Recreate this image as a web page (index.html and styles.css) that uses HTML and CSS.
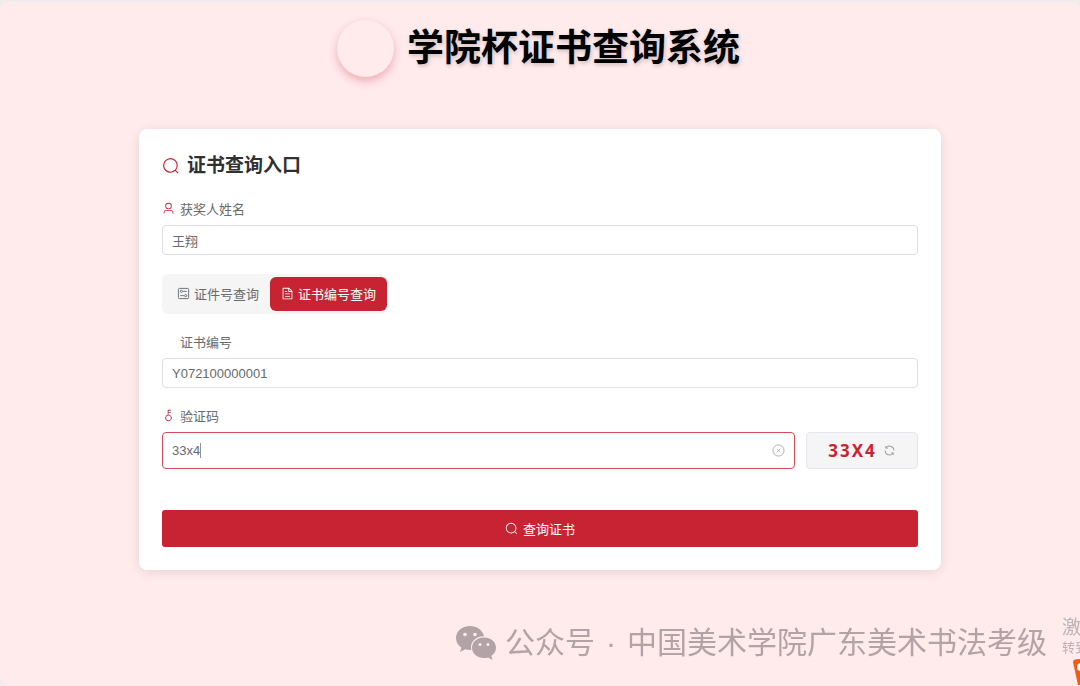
FILE: index.html
```html
<!DOCTYPE html>
<html lang="zh-CN">
  <head>
    <meta charset="utf-8">
    <title>学院杯证书查询系统</title>
    <link rel="stylesheet" href="styles.css">
  </head>
  <body>
    <div class="page">
      <header class="header">
        <div class="logo"></div>
        <h1>学院杯证书查询系统</h1>
      </header>

      <main class="card">
        <h2 class="card-title">
          <svg class="icon icon-large" viewBox="0 0 1024 1024"><path d="m795.904 750.72 124.992 124.928a32 32 0 0 1-45.248 45.248L750.656 795.904a416 416 0 1 1 45.248-45.248zM480 832a352 352 0 1 0 0-704 352 352 0 0 0 0 704z"/></svg>
          证书查询入口
        </h2>

        <form>
          <div class="field">
            <label for="name">
              <svg class="icon" viewBox="0 0 1024 1024"><path d="M512 512a192 192 0 1 0 0-384 192 192 0 0 0 0 384zm0 64a256 256 0 1 1 0-512 256 256 0 0 1 0 512zm320 320v-96a96 96 0 0 0-96-96H288a96 96 0 0 0-96 96v96a32 32 0 1 1-64 0v-96a160 160 0 0 1 160-160h448a160 160 0 0 1 160 160v96a32 32 0 1 1-64 0z"/></svg>
              获奖人姓名
            </label>
            <input class="input" type="text" id="name" value="王翔">
          </div>

          <div class="tabs">
            <button type="button" class="tab">
              <svg class="icon" viewBox="0 0 14 14"><rect class="line" x="1.500" y="1.500" width="11" height="11" rx="1"/><path class="line" d="M6.500 4.700h4M3.500 9.300h4"/><circle class="line" cx="4.700" cy="4.700" r="1.200"/><circle class="line" cx="9.300" cy="9.300" r="1.200"/></svg>
              证件号查询
            </button>
            <button type="button" class="tab active">
              <svg class="icon" viewBox="0 0 1024 1024"><path d="M832 384H576V128H192v768h640V384zm-26.496-64L640 154.496V320h165.504zM160 64h480l256 256v608a32 32 0 0 1-32 32H160a32 32 0 0 1-32-32V96a32 32 0 0 1 32-32zm160 448h384v64H320v-64zm0-192h160v64H320v-64zm0 384h384v64H320v-64z"/></svg>
              证书编号查询
            </button>
          </div>

          <div class="field">
            <label for="number"><span class="icon"></span>证书编号</label>
            <input class="input" type="text" id="number" value="Y072100000001">
          </div>

          <div class="field">
            <label for="code">
              <svg class="icon" viewBox="0 0 1024 1024"><path d="M448 456.064V96a32 32 0 0 1 32-32.064L672 64a32 32 0 0 1 0 64H512v128h160a32 32 0 0 1 0 64H512v128a256 256 0 1 1-64 8.064zM512 896a192 192 0 1 0 0-384 192 192 0 0 0 0 384z"/></svg>
              验证码
            </label>
            <div class="code-row">
              <div class="code-input">
                <input class="input" type="text" id="code" value="33x4">
                <span class="caret"></span>
                <button type="button" class="clear" aria-label="清空">
                  <svg class="icon" viewBox="0 0 14 14"><circle class="line" cx="7" cy="7" r="6"/><path class="line" d="M5.200 5.200l3.600 3.600M8.800 5.200l-3.600 3.600"/></svg>
                </button>
              </div>
              <button type="button" class="captcha" aria-label="刷新验证码">
                <span>33X4</span>
                <svg class="icon" viewBox="0 0 1024 1024"><path d="M771.776 794.880A384 384 0 0 1 128 512h64a320 320 0 0 0 555.712 216.448H654.720a32 32 0 1 1 0-64h149.056a32 32 0 0 1 32 32v148.928a32 32 0 1 1-64 0v-50.560zM276.288 295.616h92.992a32 32 0 0 1 0 64H220.160a32 32 0 0 1-32-32V178.560a32 32 0 0 1 64 0v50.560A384 384 0 0 1 896.128 512h-64a320 320 0 0 0-555.776-216.384z"/></svg>
              </button>
            </div>
          </div>

          <button type="submit" class="submit">
            <svg class="icon" viewBox="0 0 1024 1024"><path d="m795.904 750.72 124.992 124.928a32 32 0 0 1-45.248 45.248L750.656 795.904a416 416 0 1 1 45.248-45.248zM480 832a352 352 0 1 0 0-704 352 352 0 0 0 0 704z"/></svg>
            查询证书
          </button>
        </form>
      </main>
    </div>

    <div class="account">
      <svg viewBox="0 0 42 36">
        <path d="M15 1C7 1 1 6.200 1 13c0 4 2 7.300 5.400 9.500L5 27l5.300-2.700c1.500.4 3 .7 4.700.7h1.300C14.500 17 21 11 29 11.200 27.500 5 22 1 15 1z"/>
        <path d="M29 12.500c-7 0-12 4.600-12 10.300S22 33 29 33c1.500 0 2.900-.2 4.200-.6L37.500 35l-1.200-4c2.900-1.900 4.700-4.800 4.700-8.200 0-5.700-5-10.300-12-10.300z"/>
        <g class="eyes"><circle cx="10" cy="9.500" r="1.800"/><circle cx="20" cy="9.500" r="1.800"/><circle cx="25" cy="19.500" r="1.500"/><circle cx="33" cy="19.500" r="1.500"/></g>
      </svg>
      <div class="account-name">
        <span>公众号</span>
        <span>·</span>
        <span>中国美术学院广东美术书法考级</span>
      </div>
    </div>

    <div class="activate">
      <div>激活</div>
      <small>转到</small>
    </div>
    <svg class="tray-icon" viewBox="0 0 8 28">
      <path class="tray-box" d="M1 4q0-2 2-2.500L8 1v26H6z"/>
      <circle class="tray-dot" cx="9" cy="9" r="4"/>
    </svg>
  </body>
</html>
```

FILE: styles.css
```css
* {
    box-sizing: border-box;
}
html {
    background: #f0ecee;
}
body {
    margin: 0;
    overflow: hidden;
    font-family: "Liberation Sans", "Noto Sans CJK SC", sans-serif;
    font-size: 13px;
    color: #686a6e;
}
.page {
    min-height: calc(100vh - 2px);
    margin-top: 2px;
    padding: 18px 24px;
    border-radius: 8px;
    background: #ffeaec;
}
button, input {
    font: inherit;
    color: inherit;
}
button {
    display: flex;
    align-items: center;
    justify-content: center;
    padding: 0;
    border: 0;
    background: none;
    cursor: pointer;
}
.header {
    display: flex;
    justify-content: center;
    gap: 13px;
    height: 57px;
    margin-bottom: 52px;
    padding-right: 3px;
}
.logo {
    width: 57px;
    height: 57px;
    border-radius: 50%;
    box-shadow: 0 4px 8px rgba(200, 35, 51, 0.3);
}
h1 {
    margin: 0;
    font-size: 37px;
    line-height: 57px;
    color: #000;
    text-shadow: 1px 2px 4px rgba(0, 0, 0, 0.2);
}
.card {
    max-width: 802px;
    margin: 0 auto;
    padding: 23px;
    border-radius: 8px;
    background: #fff;
    box-shadow: 0 2px 12px rgba(0, 0, 0, 0.1);
}
.icon {
    width: 13px;
    height: 13px;
    flex: none;
    fill: currentColor;
}
.line {
    fill: none;
    stroke: currentColor;
}
.card-title {
    display: flex;
    align-items: center;
    gap: 7px;
    margin: 0 0 19px;
    font-size: 19px;
    line-height: 28px;
    color: #303133;
}
.icon-large {
    width: 18px;
    height: 18px;
}
.card-title .icon, label .icon {
    color: #c82333;
}
.field {
    margin-bottom: 18px;
}
label {
    display: flex;
    align-items: center;
    gap: 5px;
    height: 18px;
    margin-bottom: 8px;
}
.input {
    display: block;
    width: 100%;
    height: 30px;
    padding: 0 9px;
    border: 1px solid #dcdfe6;
    border-radius: 4px;
    background: #fff;
    outline: none;
}
.tabs {
    display: flex;
    width: fit-content;
    margin: 19px 0 18px;
    padding: 3px 0;
    border-radius: 6px;
    background: #f5f5f5;
}
.tab {
    height: 34px;
    padding: 0 11px 2px;
    gap: 4px;
    border-radius: 6px;
}
.tab:first-child {
    padding-left: 15px;
}
.tab.active {
    background: #c82333;
    color: #fff;
}
.code-row {
    display: flex;
    gap: 11px;
}
.code-input {
    position: relative;
    flex: 1;
}
.code-input .input {
    height: 37px;
    border-color: #d84a5a;
}
.caret {
    position: absolute;
    top: 11px;
    left: 38px;
    width: 1px;
    height: 15px;
    background: #909399;
}
.clear {
    position: absolute;
    top: 0;
    right: 10px;
    height: 37px;
    color: #a8abb2;
}
.captcha {
    width: 112px;
    height: 37px;
    gap: 6px;
    border: 1px solid #e4e7ed;
    border-radius: 4px;
    background: #f5f5f5;
    color: #909399;
}
.captcha span {
    font-family: "Noto Sans", sans-serif;
    font-size: 17px;
    font-weight: bold;
    letter-spacing: 2px;
    color: #c82333;
}
.submit {
    width: 100%;
    height: 37px;
    margin-top: 41px;
    gap: 5px;
    border-radius: 3px;
    background: #c82333;
    color: #fff;
}
.account {
    position: fixed;
    right: 33px;
    bottom: 21px;
    display: flex;
    align-items: center;
    gap: 8px;
    font-size: 30px;
    line-height: 44px;
    white-space: nowrap;
    color: #b2a4a6;
}
.account-name {
    display: flex;
    gap: 11px;
}
.account svg {
    width: 42px;
    height: 36px;
    fill: currentColor;
}
.account .eyes {
    fill: #ffeaec;
}
.activate {
    position: fixed;
    left: calc(100% - 18px);
    bottom: 29px;
    font-size: 19px;
    line-height: 22px;
    white-space: nowrap;
    color: #bcb4b7;
}
.activate small {
    display: block;
    font-size: 13px;
    line-height: 18px;
}
.tray-icon {
    position: fixed;
    right: 0;
    bottom: 0;
    width: 8px;
    height: 28px;
}
.tray-box {
    fill: #f4591c;
}
.tray-dot {
    fill: #fff;
}
```
